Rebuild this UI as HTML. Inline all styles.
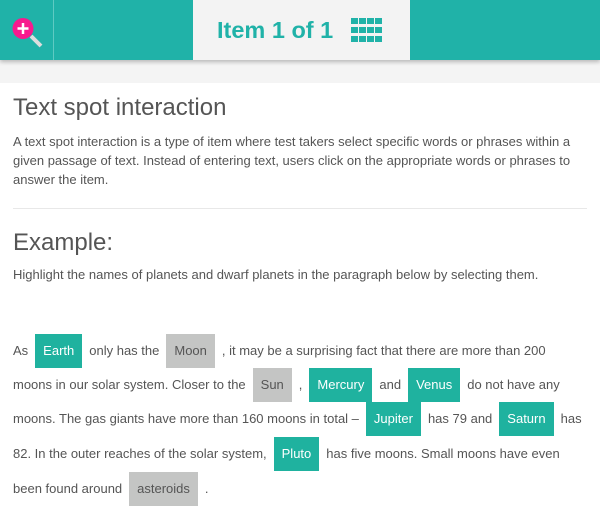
<!DOCTYPE html><html><head><style>
body{margin:0;width:600px;height:521px;background:#fff;font-family:"Liberation Sans",sans-serif;color:#555;position:relative;overflow:hidden}
.hdr{position:absolute;left:0;top:0;width:600px;height:60px;background:#20b2a8;box-shadow:0 2px 4px rgba(0,0,0,.25);z-index:2}
.band{position:absolute;left:0;top:60px;width:600px;height:23px;background:#f4f4f4}
.ctr{position:absolute;left:193px;top:0;width:217px;height:60px;background:#f3f3f3;color:#20b2a8;font-weight:bold;font-size:23.5px;line-height:60px}
.ln{position:absolute;left:13px;font-size:13px;white-space:nowrap;line-height:34px;height:34px}
.t{display:inline-block;padding:0 8px;margin:0 7px;height:34px;line-height:34px}
.g{background:#1fb29f;color:#fff}.s{background:#c4c5c4;color:#555}
</style></head><body>
<div class="hdr">
<div style="position:absolute;left:53px;top:0;width:1px;height:60px;background:#5fcac2"></div>
<svg style="position:absolute;left:12px;top:18px" width="34" height="34"><line x1="19" y1="18" x2="29" y2="28" stroke="#ddd" stroke-width="4"/><circle cx="11" cy="10.5" r="10.5" fill="#f71a8e"/><path d="M11 5V16M5.5 10.5H16.5" stroke="#fff" stroke-width="2.5"/></svg>
<div class="ctr"><span style="position:absolute;left:24px">Item 1 of 1</span>
<svg style="position:absolute;left:158px;top:18px" width="31" height="24"><g fill="#20b2a8">
<rect x="0" y="0" width="7" height="6"/><rect x="8" y="0" width="7" height="6"/><rect x="16" y="0" width="7" height="6"/><rect x="24" y="0" width="7" height="6"/>
<rect x="0" y="9" width="7" height="6"/><rect x="8" y="9" width="7" height="6"/><rect x="16" y="9" width="7" height="6"/><rect x="24" y="9" width="7" height="6"/>
<rect x="0" y="18" width="7" height="6"/><rect x="8" y="18" width="7" height="6"/><rect x="16" y="18" width="7" height="6"/><rect x="24" y="18" width="7" height="6"/></g></svg>
</div></div>
<div class="band"></div>
<div style="position:absolute;left:13px;top:94px;font-size:24px;color:#555">Text spot interaction</div>
<div style="position:absolute;left:13px;top:132px;width:580px;font-size:13px;line-height:19px">A text spot interaction is a type of item where test takers select specific words or phrases within a given passage of text. Instead of entering text, users click on the appropriate words or phrases to answer the item.</div>
<div style="position:absolute;left:13px;top:208px;width:574px;height:1px;background:#e8e8e8"></div>
<div style="position:absolute;left:13px;top:229px;font-size:24px">Example:</div>
<div style="position:absolute;left:13px;top:267px;font-size:13px">Highlight the names of planets and dwarf planets in the paragraph below by selecting them.</div>
<div class="ln" style="top:334px">As<span class="t g">Earth</span>only has the<span class="t s">Moon</span>, it may be a surprising fact that there are more than 200</div>
<div class="ln" style="top:368px">moons in our solar system. Closer to the<span class="t s">Sun</span>,<span class="t g">Mercury</span>and<span class="t g">Venus</span>do not have any</div>
<div class="ln" style="top:402px">moons. The gas giants have more than 160 moons in total –<span class="t g">Jupiter</span>has 79 and<span class="t g">Saturn</span>has</div>
<div class="ln" style="top:437px">82. In the outer reaches of the solar system,<span class="t g">Pluto</span>has five moons. Small moons have even</div>
<div class="ln" style="top:472px">been found around<span class="t s">asteroids</span>.</div>
</body></html>
